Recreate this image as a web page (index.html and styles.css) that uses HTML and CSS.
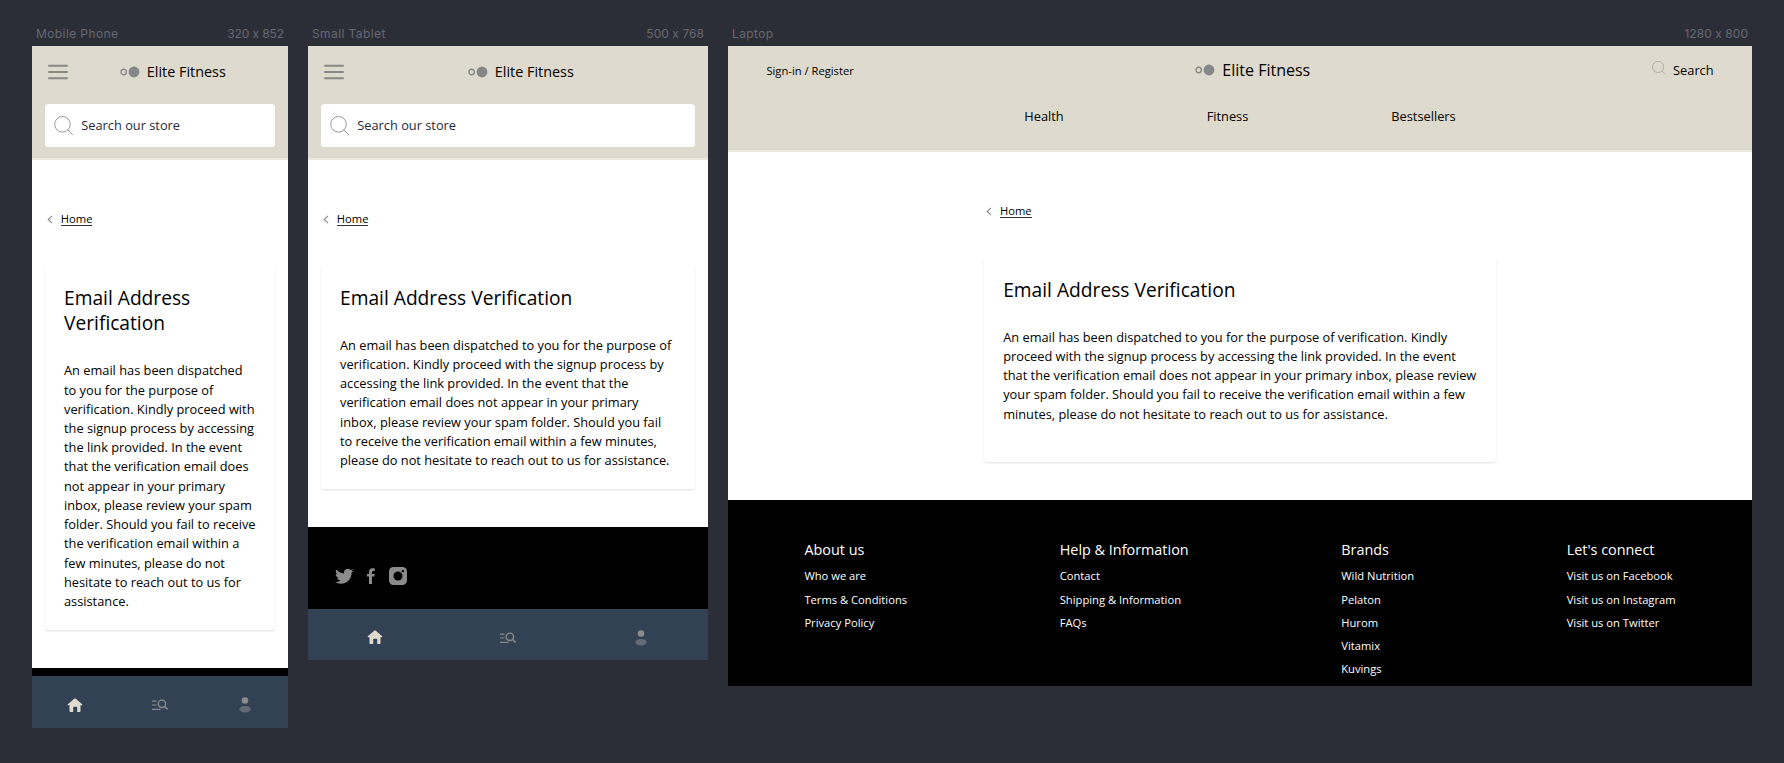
FILE: index.html
```
<!DOCTYPE html>
<html lang="en">
<head>
<meta charset="utf-8">
<title>Elite Fitness</title>
<link rel="stylesheet" href="styles.css">
</head>
<body>
<svg class="defs" aria-hidden="true">
  <symbol id="menu" viewBox="0 0 20 16"><path d="M1 1.7h18M1 8h18M1 14.3h18" fill="none" stroke="#868787" stroke-width="2" stroke-linecap="round"/></symbol>
  <symbol id="logo" viewBox="0 0 20 12"><circle cx="3.7" cy="6" r="2.7" fill="none" stroke="#868787" stroke-width="1.4"/><circle cx="14" cy="6" r="5.4" fill="#868787"/></symbol>
  <symbol id="search" viewBox="0 0 20 20"><circle cx="8.7" cy="8.5" r="8" fill="none" stroke="#868787" stroke-width="0.9"/><path d="M14.2 14.2l5 5" stroke="#868787" stroke-width="0.9"/></symbol>
  <symbol id="chevron" viewBox="0 0 6 9"><path d="M5 .8L1.2 4.5 5 8.2" fill="none" stroke="#868787" stroke-width="1.1"/></symbol>
  <symbol id="home" viewBox="0 0 16 15"><path d="M7.5.6q.5-.4 1 0l6.7 5.7q.5.6-.2.9h-1.5v5.9q0 .9-.9.9h-2.400V9.400q0-.6-.6-.6H6.800q-.6 0-.6.6V14H3.400q-.9 0-.9-.9V7.200H1q-.7-.3-.2-.9z" fill="#dedacd"/></symbol>
  <symbol id="listsearch" viewBox="0 0 16 12"><path d="M0 2.100h4.500M0 6h4.500M0 10.300h8.500" stroke="#8b8b8b" stroke-width="1.200"/><circle cx="9.900" cy="4.800" r="3.700" fill="none" stroke="#8b8b8b" stroke-width="1.400"/><path d="M12.400 7.300l3.100 3.100" stroke="#8b8b8b" stroke-width="1.500"/></symbol>
  <symbol id="user" viewBox="0 0 12 16"><circle cx="6" cy="3.500" r="3.300" fill="#8b8b8b"/><ellipse cx="6" cy="12.200" rx="5.600" ry="3.300" fill="#646b75"/></symbol>
  <symbol id="twitter" viewBox="0 0 24 24"><path fill="#8b8b8b" d="M23.950 4.570a10 10 0 0 1-2.820.770 4.960 4.960 0 0 0 2.160-2.720c-.950.550-2 .950-3.130 1.180a4.920 4.920 0 0 0-8.380 4.480C7.690 8.090 4.070 6.130 1.640 3.160a4.820 4.820 0 0 0-.670 2.480c0 1.710.870 3.210 2.190 4.100a4.900 4.900 0 0 1-2.230-.620v.060a4.920 4.920 0 0 0 3.950 4.830 5 5 0 0 1-2.210.080 4.940 4.940 0 0 0 4.600 3.420A9.870 9.870 0 0 1 0 19.540a13.990 13.990 0 0 0 7.550 2.210c9.050 0 14-7.500 14-13.980 0-.210 0-.420-.020-.630a9.940 9.940 0 0 0 2.420-2.570z"/></symbol>
  <symbol id="facebook" viewBox="0 0 8 16"><path fill="#8b8b8b" d="M2 16V8.600H0V6h2V4Q2 .3 5.300.2H7.700V2.900H6.300Q5 2.900 5 4.200V6H7.700L7.300 8.600H5V16z"/></symbol>
  <symbol id="instagram" viewBox="0 0 18 18"><rect width="18" height="18" rx="4.600" fill="#8b8b8b"/><circle cx="9" cy="9" r="4.500" fill="#000"/><circle cx="13.900" cy="4.100" r="1.200" fill="#000"/></symbol>
</svg>

<main class="board">
  <section class="device phone">
    <div class="label"><span>Mobile Phone</span><span>320 x 852</span></div>
    <div class="screen">
      <header class="top">
        <div class="bar">
          <svg class="i-menu"><use href="#menu"/></svg>
          <div class="brand"><svg class="i-logo"><use href="#logo"/></svg><span>Elite Fitness</span></div>
        </div>
        <div class="field"><svg class="i-search"><use href="#search"/></svg><span>Search our store</span></div>
      </header>
      <div class="page">
        <div class="crumb"><svg class="i-chevron"><use href="#chevron"/></svg><a>Home</a></div>
        <article class="card">
          <h1>Email Address Verification</h1>
          <p>An email has been dispatched to you for the purpose of verification. Kindly proceed with the signup process by accessing the link provided. In the event that the verification email does not appear in your primary inbox, please review your spam folder. Should you fail to receive the verification email within a few minutes, please do not hesitate to reach out to us for assistance.</p>
        </article>
      </div>
      <footer class="social"></footer>
      <nav class="tabs">
        <svg class="i-home"><use href="#home"/></svg>
        <svg class="i-list"><use href="#listsearch"/></svg>
        <svg class="i-user"><use href="#user"/></svg>
      </nav>
    </div>
  </section>

  <section class="device tablet">
    <div class="label"><span>Small Tablet</span><span>500 x 768</span></div>
    <div class="screen">
      <header class="top">
        <div class="bar">
          <svg class="i-menu"><use href="#menu"/></svg>
          <div class="brand"><svg class="i-logo"><use href="#logo"/></svg><span>Elite Fitness</span></div>
        </div>
        <div class="field"><svg class="i-search"><use href="#search"/></svg><span>Search our store</span></div>
      </header>
      <div class="page">
        <div class="crumb"><svg class="i-chevron"><use href="#chevron"/></svg><a>Home</a></div>
        <article class="card">
          <h1>Email Address Verification</h1>
          <p>An email has been dispatched to you for the purpose of verification. Kindly proceed with the signup process by accessing the link provided. In the event that the verification email does not appear in your primary inbox, please review your spam folder. Should you fail to receive the verification email within a few minutes, please do not hesitate to reach out to us for assistance.</p>
        </article>
      </div>
      <footer class="social">
        <svg class="i-twitter"><use href="#twitter"/></svg>
        <svg class="i-facebook"><use href="#facebook"/></svg>
        <svg class="i-instagram"><use href="#instagram"/></svg>
      </footer>
      <nav class="tabs">
        <svg class="i-home"><use href="#home"/></svg>
        <svg class="i-list"><use href="#listsearch"/></svg>
        <svg class="i-user"><use href="#user"/></svg>
      </nav>
    </div>
  </section>

  <section class="device laptop">
    <div class="label"><span>Laptop</span><span>1280 x 800</span></div>
    <div class="screen">
      <header class="top">
        <div class="bar">
          <span class="signin">Sign-in / Register</span>
          <div class="brand"><svg class="i-logo"><use href="#logo"/></svg><span>Elite Fitness</span></div>
          <div class="find"><svg class="i-find"><use href="#search"/></svg><span>Search</span></div>
        </div>
        <nav class="menu"><span>Health</span><span>Fitness</span><span>Bestsellers</span></nav>
      </header>
      <div class="page">
        <div class="crumb"><svg class="i-chevron"><use href="#chevron"/></svg><a>Home</a></div>
        <article class="card">
          <h1>Email Address Verification</h1>
          <p>An email has been dispatched to you for the purpose of verification. Kindly proceed with the signup process by accessing the link provided. In the event that the verification email does not appear in your primary inbox, please review your spam folder. Should you fail to receive the verification email within a few minutes, please do not hesitate to reach out to us for assistance.</p>
        </article>
      </div>
      <footer class="links">
        <div><h2>About us</h2><ul><li>Who we are</li><li>Terms &amp; Conditions</li><li>Privacy Policy</li></ul></div>
        <div><h2>Help &amp; Information</h2><ul><li>Contact</li><li>Shipping &amp; Information</li><li>FAQs</li></ul></div>
        <div><h2>Brands</h2><ul><li>Wild Nutrition</li><li>Pelaton</li><li>Hurom</li><li>Vitamix</li><li>Kuvings</li></ul></div>
        <div><h2>Let's connect</h2><ul><li>Visit us on Facebook</li><li>Visit us on Instagram</li><li>Visit us on Twitter</li></ul></div>
      </footer>
    </div>
  </section>
</main>
</body>
</html>
```
FILE: styles.css
```
* { box-sizing: border-box; }
body {
  margin: 0;
  background: #2c2e37;
  color: #000;
  font-family: "Open Sans", "Noto Sans", sans-serif;
  font-size: 12.8px;
}
svg { display: block; flex: none; }
.defs { position: absolute; width: 0; height: 0; }
h1, h2, p, ul { margin: 0; padding: 0; font-weight: 400; }
li { list-style: none; }
span, a, li, h2 { white-space: nowrap; }

.board {
  height: 763px;
  padding: 20px 32px 0;
  display: flex;
  align-items: flex-start;
  gap: 20px;
  overflow: hidden;
}
.device { flex: none; }
.phone { width: 256px; }
.tablet { width: 400px; }
.laptop { width: 1024px; }
.label {
  height: 26px;
  padding: 0 4px;
  display: flex;
  justify-content: space-between;
  align-items: center;
  font: 12px Inter, sans-serif;
  font-feature-settings: "calt" 0;
  letter-spacing: 0.4px;
  color: #666873;
}
.label span:last-child { letter-spacing: 0.05px; }
.phone .label span:last-child { letter-spacing: -0.1px; }
.screen { display: flex; flex-direction: column; background: #fff; overflow: hidden; }
.phone .screen { height: 681.600px; }
.tablet .screen { height: 614.400px; }
.laptop .screen { height: 640px; }

.top { height: 114px; flex: none; padding: 0 12.800px; background: #dedacd; border-bottom: 2px solid #ebe8dc; }
.bar { height: 51px; display: grid; grid-template-columns: 1fr auto 1fr; align-items: center; }
.brand { display: flex; align-items: center; font-size: 14.400px; gap: 7px; padding-left: 25.600px; }
.i-menu { width: 20px; height: 16px; margin-left: 2.800px; }
.i-logo { width: 20px; height: 12px; }
.field {
  height: 43.500px;
  margin-top: 6.500px;
  padding-left: 9px;
  display: flex;
  align-items: center;
  gap: 8px;
  border-radius: 3.500px;
  background: #fff;
  color: #1e2a3b;
}
.i-search { width: 19.500px; height: 19.500px; }

.page { flex: none; padding: 51px 12.800px 38.400px; }
.crumb { height: 17px; display: flex; align-items: center; gap: 8px; padding-left: 2px; font-size: 11.200px; }
.crumb a { line-height: 12.500px; border-bottom: 1px solid #333; }
.i-chevron { width: 6px; height: 9px; }
.card {
  margin-top: 37px;
  padding: 19.700px 19.200px 18.700px;
  border-radius: 3.200px;
  background: #fff;
  box-shadow: 0 1px 2px rgba(0, 0, 0, .13);
}
.card h1 { font-size: 19.200px; line-height: 25.600px; margin-bottom: 25.600px; }
.card p { line-height: 19.200px; }

.social { flex: 1; background: #000; display: flex; align-items: center; padding: 16px 26.800px 0; }
.phone .social { padding: 0; }
.i-twitter { width: 18.500px; height: 18.500px; }
.i-facebook { width: 8px; height: 16px; margin: 0 14px; }
.i-instagram { width: 18px; height: 18px; }
.tabs { height: 51.200px; flex: none; display: grid; grid-template-columns: repeat(3, 1fr); place-items: center; background: #334155; padding-top: 6px; }
.i-home { width: 16px; height: 15px; }
.i-list { width: 16px; height: 12px; }
.i-user { width: 12px; height: 16px; }

.laptop .top { height: 106px; padding: 0 38.400px; }
.laptop .bar { height: 48px; }
.laptop .brand { font-size: 16px; }
.signin { font-size: 11.200px; }
.find { justify-self: end; display: flex; align-items: center; gap: 7px; }
.i-find { width: 14px; height: 14px; margin-bottom: 4px; opacity: .8; }
.menu { height: 43px; display: flex; align-items: center; justify-content: center; gap: 143px; }
.laptop .page { width: 512px; margin: 0 auto; padding-left: 0; padding-right: 0; }
.laptop .card { padding-bottom: 37.900px; }
.links { flex: 1; background: #000; color: #fff; display: flex; justify-content: space-between; padding: 39.200px 76.400px 0; }
.links h2 { font-size: 14.400px; line-height: 22px; margin-bottom: 3px; }
.links li { font-size: 11.200px; line-height: 23.200px; }
```
